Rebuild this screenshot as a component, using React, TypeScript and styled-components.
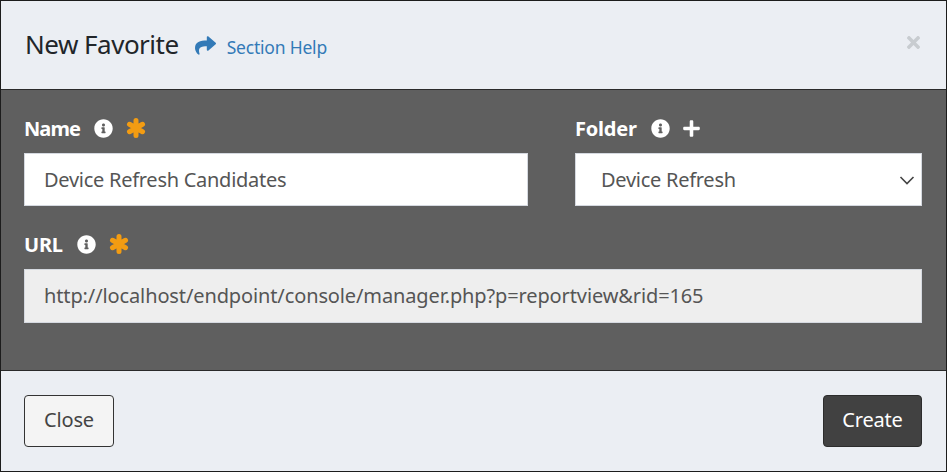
import React from 'react'
import styled, { createGlobalStyle } from 'styled-components'
import { FaShare, FaInfoCircle, FaPlus, FaTimes } from 'react-icons/fa'

const GlobalStyle = createGlobalStyle`
  html, body {
    margin: 0;
    padding: 0;
    background: #222;
  }
  body {
    font-family: "Noto Sans", "Open Sans", sans-serif;
  }
`

const Modal = styled.div`
  box-sizing: border-box;
  width: 947px;
  height: 472px;
  border: 1px solid #1c1c1c;
  display: flex;
  flex-direction: column;
  background: #ebeef3;
`

const Header = styled.div`
  box-sizing: border-box;
  height: 89px;
  flex: none;
  display: flex;
  align-items: center;
  padding: 0 24px;
  border-bottom: 1px solid #2a2a2a;
`

const Title = styled.h4`
  margin: 0;
  padding-bottom: 3px;
  font-size: 26px;
  font-weight: 400;
  letter-spacing: -0.5px;
  color: #212529;
`

const HelpLink = styled.a`
  display: flex;
  align-items: center;
  margin-left: 16px;
  padding-top: 4px;
  color: #337ab7;
  font-size: 17.5px;
  letter-spacing: -0.2px;
  svg {
    margin-right: 11px;
    margin-top: -3px;
    width: 21px;
    height: 21px;
  }
`

const Dismiss = styled.button`
  margin-left: auto;
  margin-top: -6px;
  margin-right: 1px;
  padding: 0;
  border: 0;
  background: none;
  color: #c8ccd0;
  display: flex;
  svg {
    width: 15px;
    height: 19px;
  }
`

const Body = styled.div`
  box-sizing: border-box;
  height: 281px;
  flex: none;
  background: #5f5f5f;
  padding: 25px 24px 0 23px;
  border-bottom: 1px solid #2a2a2a;
`

const Row = styled.div`
  display: grid;
  grid-template-columns: 504px 347px;
  column-gap: 47px;
  margin-bottom: 25px;
`

const Field = styled.div`
  display: flex;
  flex-direction: column;
`

const Label = styled.div<{ $tight?: boolean }>`
  display: flex;
  align-items: center;
  height: 26px;
  margin-bottom: 12px;
  color: #fff;
  font-size: 20px;
  font-weight: 700;
  letter-spacing: ${p => (p.$tight ? -0.9 : -0.2)}px;
`

const InfoIcon = styled(FaInfoCircle)`
  margin-left: 14px;
  width: 19px;
  height: 19px;
  color: #fff;
`

const RequiredMark = styled.svg`
  margin-left: 13px;
  width: 20px;
  height: 20px;
  color: #f39c12;
`

const PlusIcon = styled(FaPlus)`
  margin-left: 12px;
  width: 19px;
  height: 19px;
  color: #fff;
`

const Control = styled.div<{ $readOnly?: boolean; $select?: boolean }>`
  box-sizing: border-box;
  height: ${p => (p.$readOnly ? 54 : 53)}px;
  display: flex;
  align-items: center;
  justify-content: space-between;
  padding: 0 6px ${p => (p.$readOnly ? 2 : 0)}px ${p => (p.$select ? 25 : 19)}px;
  background: ${p => (p.$readOnly ? '#eeeeee' : '#ffffff')};
  border: 1px solid #d5d9e0;
  color: #555;
  font-size: 20px;
  letter-spacing: ${p => (p.$readOnly ? -0.12 : -0.27)}px;
`

const Chevron = styled.svg`
  width: 16px;
  height: 16px;
`

const Footer = styled.div`
  flex: 1;
  display: flex;
  align-items: center;
  justify-content: space-between;
  padding: 0 24px 0 23px;
`

const Button = styled.button<{ $primary?: boolean }>`
  box-sizing: border-box;
  height: 52px;
  width: ${p => (p.$primary ? 99 : 90)}px;
  padding: 0 0 4px;
  border-radius: 4px;
  border: 1px solid ${p => (p.$primary ? '#2c2c2c' : '#333')};
  background: ${p => (p.$primary ? '#414141' : '#f4f4f4')};
  color: ${p => (p.$primary ? '#fff' : '#444')};
  font-family: inherit;
  font-size: 20px;
  letter-spacing: -0.2px;
`

const Required = () => (
  <RequiredMark viewBox="0 0 24 24" fill="none" stroke="currentColor" strokeWidth="6" strokeLinecap="round">
    <path d="M12 3v18M4.2 7.5l15.6 9M19.8 7.5l-15.6 9" />
  </RequiredMark>
)

export default function App() {
  return (
    <>
      <GlobalStyle />
      <Modal>
        <Header>
          <Title>New Favorite</Title>
          <HelpLink><FaShare />Section Help</HelpLink>
          <Dismiss><FaTimes /></Dismiss>
        </Header>
        <Body>
          <Row>
            <Field>
              <Label $tight>Name<InfoIcon /><Required /></Label>
              <Control>Device Refresh Candidates</Control>
            </Field>
            <Field>
              <Label>Folder<InfoIcon /><PlusIcon /></Label>
              <Control $select>
                Device Refresh
                <Chevron viewBox="0 0 16 16" fill="none" stroke="#444" strokeWidth="1.6">
                  <path d="M1.5 5l6.5 6.5L14.5 5" />
                </Chevron>
              </Control>
            </Field>
          </Row>
          <Field>
            <Label>URL<InfoIcon /><Required /></Label>
            <Control $readOnly>http://localhost/endpoint/console/manager.php?p=reportview&amp;rid=165</Control>
          </Field>
        </Body>
        <Footer>
          <Button>Close</Button>
          <Button $primary>Create</Button>
        </Footer>
      </Modal>
    </>
  )
}
